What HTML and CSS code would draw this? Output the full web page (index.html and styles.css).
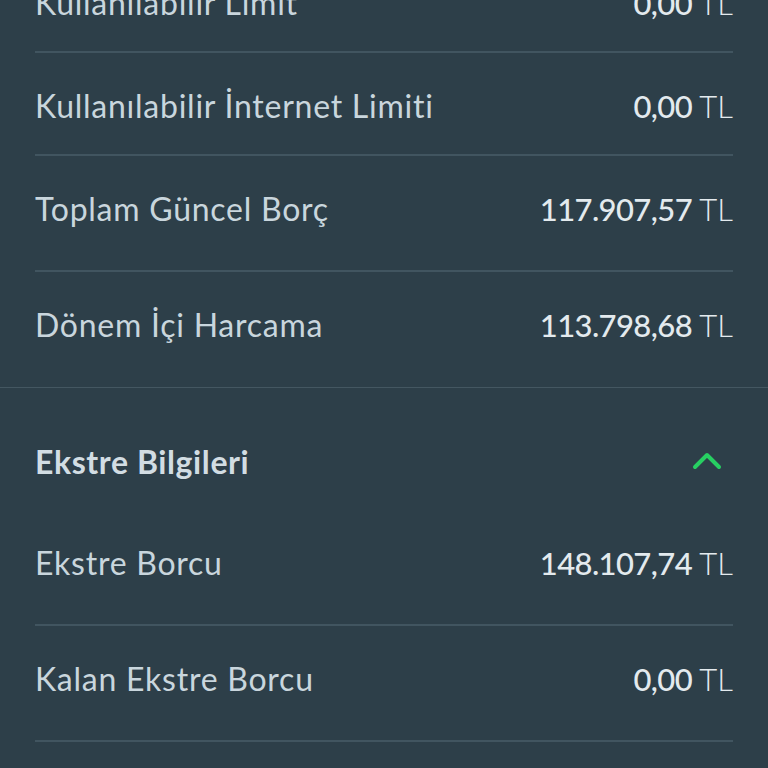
FILE: index.html
```html
<!DOCTYPE html>
<html lang="tr">
<head>
<meta charset="utf-8">
<title>Kart Bilgileri</title>
<link rel="stylesheet" href="styles.css">
</head>
<body>
<main class="screen">
  <section class="section section--limits">
    <div class="row row--compact">
      <span class="label">Kullanılabilir Limit</span>
      <span class="value"><span class="amount">0,00</span> <span class="currency">TL</span></span>
    </div>
    <div class="row row--compact">
      <span class="label">Kullanılabilir İnternet Limiti</span>
      <span class="value"><span class="amount">0,00</span> <span class="currency">TL</span></span>
    </div>
    <div class="row">
      <span class="label">Toplam Güncel Borç</span>
      <span class="value"><span class="amount">117.907,57</span> <span class="currency">TL</span></span>
    </div>
    <div class="row row--last">
      <span class="label">Dönem İçi Harcama</span>
      <span class="value"><span class="amount">113.798,68</span> <span class="currency">TL</span></span>
    </div>
  </section>
  <section class="section section--statement">
    <div class="section-header">
      <h2 class="section-title">Ekstre Bilgileri</h2>
      <svg class="chevron" width="30" height="20" viewBox="0 0 30 20" aria-hidden="true">
        <path d="M3 15 L15 3 L27 15" fill="none" stroke="#27cf62" stroke-width="4" stroke-linecap="round" stroke-linejoin="round"/>
      </svg>
    </div>
    <div class="row">
      <span class="label">Ekstre Borcu</span>
      <span class="value"><span class="amount">148.107,74</span> <span class="currency">TL</span></span>
    </div>
    <div class="row">
      <span class="label">Kalan Ekstre Borcu</span>
      <span class="value"><span class="amount">0,00</span> <span class="currency">TL</span></span>
    </div>
  </section>
</main>
</body>
</html>
```
FILE: styles.css
```css
html, body {
  margin: 0;
  padding: 0;
  background: #2d3f49;
  height: 100%;
  overflow: hidden;
}

.screen {
  font-family: "Lato", "Noto Sans", sans-serif;
  color: #c9d6dd;
  margin-top: -50px;
}

.section--limits {
  border-bottom: 1px solid #445761;
}

.section {
  padding: 0 35px;
}

.row {
  display: flex;
  justify-content: space-between;
  align-items: baseline;
  padding: 35px 0 43px;
  border-bottom: 2px solid #415560;
  line-height: 36px;
}

.row--compact {
  padding-bottom: 30px;
}

.row--last {
  border-bottom: none;
  padding-bottom: 44px;
}

.label {
  font-size: 32px;
  font-weight: 400;
  letter-spacing: 0.75px;
}

.value {
  font-size: 31px;
  color: #e3eaee;
  white-space: nowrap;
  letter-spacing: -0.6px;
}

.amount {
  font-weight: 500;
}

.currency {
  font-weight: 300;
  letter-spacing: 0;
}

.section-header {
  display: flex;
  justify-content: space-between;
  align-items: center;
  padding: 56px 0 30px;
}

.section-title {
  margin: 0;
  font-size: 32px;
  line-height: 36px;
  font-weight: 700;
  letter-spacing: 0.6px;
  color: #d2dde3;
}

.chevron {
  margin-right: 11px;
}
```
